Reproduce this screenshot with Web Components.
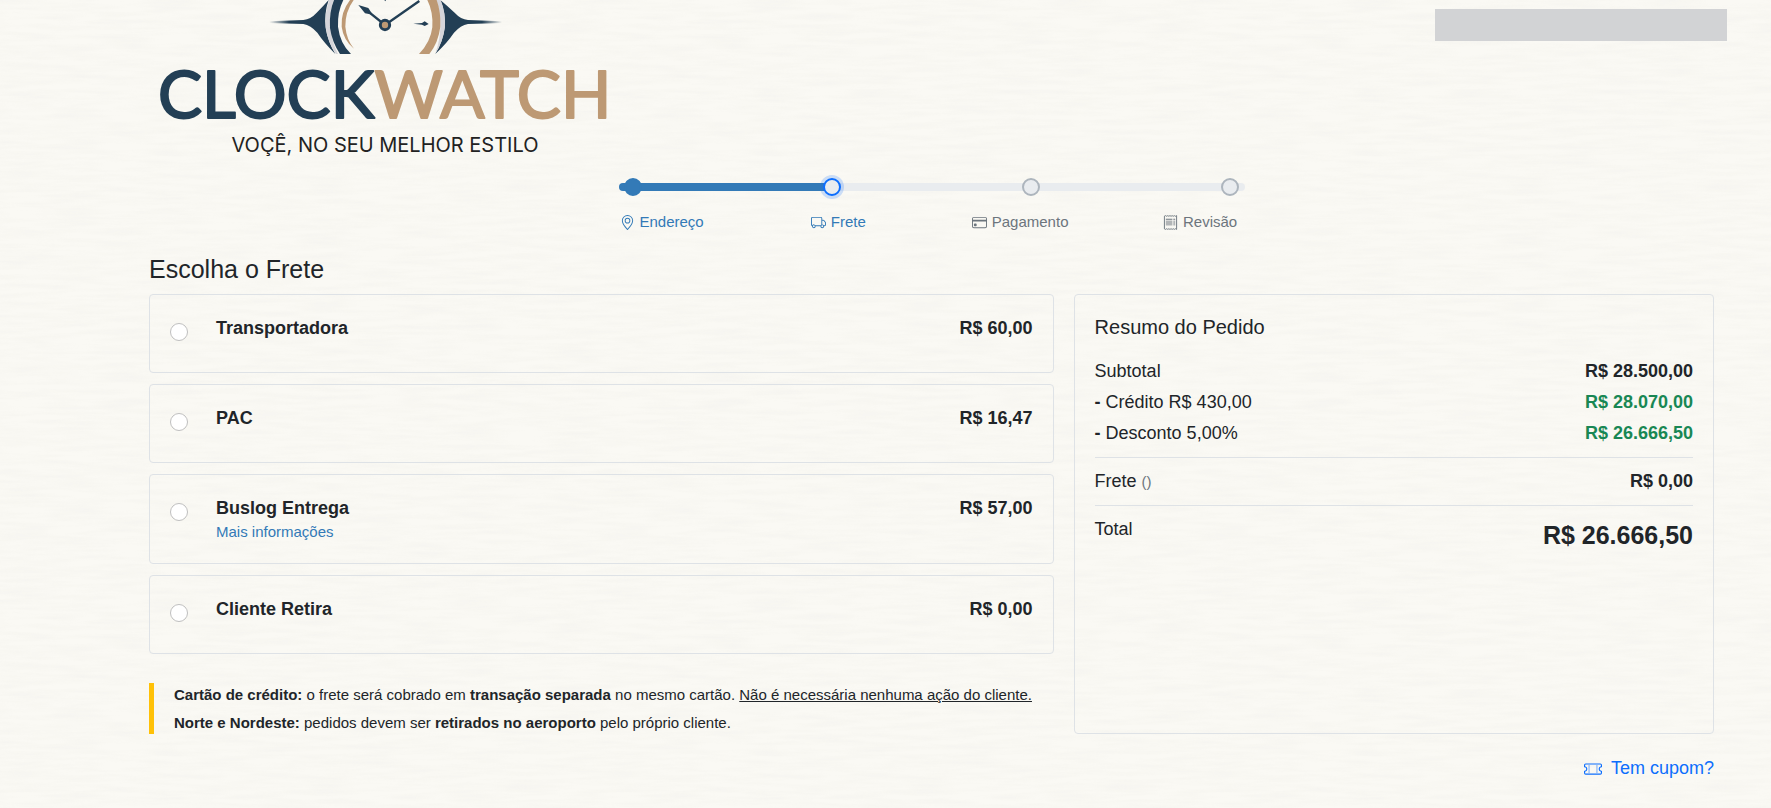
<!DOCTYPE html>
<html lang="pt-BR">
<head>
<meta charset="UTF-8">
<meta name="viewport" content="width=device-width, initial-scale=1">
<title>ClockWatch - Frete</title>
<style>
    :root {
        --text: #212529;
        --muted: #6c757d;
        --border: #dee2e6;
        --brand: #337ab7;
        --link: #0d6efd;
        --success: #198754;
    }

    body {
        margin: 0;
        color: var(--text);
        font: 18px/27px Arial, "Liberation Sans", sans-serif;
        background: #faf9f4 url("data:image/svg+xml,%3Csvg xmlns='http://www.w3.org/2000/svg' width='600' height='600'%3E%3Cfilter id='p' x='0' y='0' width='100%25' height='100%25'%3E%3CfeTurbulence type='fractalNoise' baseFrequency='.02 .2' numOctaves='3' seed='4' stitchTiles='stitch'/%3E%3CfeColorMatrix values='0 0 0 0 .55 0 0 0 0 .55 0 0 0 0 .5 .13 0 0 0 -.045'/%3E%3C/filter%3E%3Crect width='600' height='600' filter='url(%23p)'/%3E%3C/svg%3E");
    }
</style>
</head>
<body>

<store-header></store-header>

<checkout-page>
    <checkout-steps slot="steps"></checkout-steps>

    <shipping-option name="Transportadora" price="R$ 60,00"></shipping-option>
    <shipping-option name="PAC" price="R$ 16,47"></shipping-option>
    <shipping-option name="Buslog Entrega" price="R$ 57,00"><a href="#info">Mais informações</a></shipping-option>
    <shipping-option name="Cliente Retira" price="R$ 0,00"></shipping-option>

    <shipping-notes>
        <p><b>Cartão de crédito:</b> o frete será cobrado em <b>transação separada</b> no mesmo cartão. <u>Não é necessária nenhuma ação do cliente.</u></p>
        <p><b>Norte e Nordeste:</b> pedidos devem ser <b>retirados no aeroporto</b> pelo próprio cliente.</p>
    </shipping-notes>

    <order-summary slot="summary"></order-summary>
    <coupon-link slot="coupon">Tem cupom?</coupon-link>
</checkout-page>

<script>
    // Icons share a 16x16 box
    const ICONS = {
        pin: '<path d="M12.166 8.94c-.524 1.062-1.234 2.12-1.96 3.07A31.5 31.5 0 0 1 8 14.58a31.5 31.5 0 0 1-2.206-2.57c-.726-.95-1.436-2.008-1.96-3.07C3.304 7.867 3 6.862 3 6a5 5 0 0 1 10 0c0 .862-.305 1.867-.834 2.94M8 16s6-5.686 6-10A6 6 0 0 0 2 6c0 4.314 6 10 6 10"/><path d="M8 8a2 2 0 1 1 0-4 2 2 0 0 1 0 4m0 1a3 3 0 1 0 0-6 3 3 0 0 0 0 6"/>',
        truck: '<path d="M0 3.5A1.5 1.5 0 0 1 1.5 2h9A1.5 1.5 0 0 1 12 3.5V5h1.02a1.5 1.5 0 0 1 1.17.563l1.481 1.85a1.5 1.5 0 0 1 .329.938V10.5a1.5 1.5 0 0 1-1.5 1.5H14a2 2 0 1 1-4 0H5a2 2 0 1 1-3.998-.085A1.5 1.5 0 0 1 0 10.5zm1.294 7.456A2 2 0 0 1 4.732 11h5.536a2 2 0 0 1 .732-.732V3.5a.5.5 0 0 0-.5-.5h-9a.5.5 0 0 0-.5.5v7a.5.5 0 0 0 .294.456M12 10a2 2 0 0 1 1.732 1h.768a.5.5 0 0 0 .5-.5V8.35a.5.5 0 0 0-.11-.312l-1.48-1.85A.5.5 0 0 0 13.02 6H12zm-9 1a1 1 0 1 0 0 2 1 1 0 0 0 0-2m9 0a1 1 0 1 0 0 2 1 1 0 0 0 0-2"/>',
        card: '<path d="M0 4a2 2 0 0 1 2-2h12a2 2 0 0 1 2 2v8a2 2 0 0 1-2 2H2a2 2 0 0 1-2-2zm2-1a1 1 0 0 0-1 1v1h14V4a1 1 0 0 0-1-1zm13 4H1v5a1 1 0 0 0 1 1h12a1 1 0 0 0 1-1z"/><path d="M2 10a1 1 0 0 1 1-1h1a1 1 0 0 1 1 1v1a1 1 0 0 1-1 1H3a1 1 0 0 1-1-1z"/>',
        receipt: '<path d="M1.5 1.2 2.5.6l1 .8 1-.8 1 .8 1-.8 1 .8 1-.8 1 .8 1-.8 1 .8 1-.8 1 .8 1-.8v14.8l-1-.8-1 .8-1-.8-1 .8-1-.8-1 .8-1-.8-1 .8-1-.8-1 .8-1-.8-1 .8-1-.6z" fill="none" stroke="currentColor"/><path d="M3 4h7v1H3zm0 2h7v1H3zm0 2h7v1H3zm0 2h7v1H3zm8-6h2v1h-2zm0 2h2v1h-2zm0 2h2v1h-2zm0 2h2v1h-2z"/>',
        ticket: '<path d="M4 4.85v.9h1v-.9zm7 0v.9h1v-.9zm-7 1.8v.9h1v-.9zm7 0v.9h1v-.9zm-7 1.8v.9h1v-.9zm7 0v.9h1v-.9zm-7 1.8v.9h1v-.9zm7 0v.9h1v-.9z"/><path d="M1.5 3A1.5 1.5 0 0 0 0 4.5V6a.5.5 0 0 0 .5.5 1.5 1.5 0 1 1 0 3 .5.5 0 0 0-.5.5v1.5A1.5 1.5 0 0 0 1.5 13h13a1.5 1.5 0 0 0 1.5-1.5V10a.5.5 0 0 0-.5-.5 1.5 1.5 0 0 1 0-3A.5.5 0 0 0 16 6V4.5A1.5 1.5 0 0 0 14.5 3zM1 4.5a.5.5 0 0 1 .5-.5h13a.5.5 0 0 1 .5.5v1.05a2.5 2.5 0 0 0 0 4.9v1.05a.5.5 0 0 1-.5.5h-13a.5.5 0 0 1-.5-.5v-1.05a2.5 2.5 0 0 0 0-4.9z"/>'
    };

    function icon(name, size) {
        return `<svg width="${size}" height="${size}" viewBox="0 0 16 16" fill="currentColor" aria-hidden="true">${ICONS[name]}</svg>`;
    }

    class StoreHeader extends HTMLElement {
        constructor() {
            super();
            this.attachShadow({ mode: 'open' });
        }

        connectedCallback() {
            this.shadowRoot.innerHTML = `
                <style>
                    :host {
                        display: flex;
                        justify-content: space-between;
                        align-items: flex-start;
                        padding: 0 44px 0 140px;
                    }

                    .logo svg {
                        display: block;
                    }

                    .wordmark {
                        font: 66px/1 Lato, sans-serif;
                        stroke-width: 2px;
                        stroke-linejoin: round;
                    }

                    .clock {
                        fill: #233f55;
                        stroke: #233f55;
                    }

                    .watch {
                        fill: #bd9974;
                        stroke: #bd9974;
                    }

                    .tagline {
                        font: 20px/1 Inter, sans-serif;
                        fill: #222;
                        text-anchor: middle;
                    }

                    .account {
                        width: 292px;
                        height: 32px;
                        margin-top: 9px;
                        background: #d2d3d5;
                    }
                </style>
                <a class="logo" href="#inicio" aria-label="ClockWatch">
                    <svg width="500" height="160" viewBox="0 0 500 160">
                        <defs>
                            <linearGradient id="left"><stop offset="0" stop-color="#233f55" stop-opacity="0"/><stop offset=".3" stop-color="#233f55"/></linearGradient>
                            <linearGradient id="right"><stop offset=".7" stop-color="#233f55"/><stop offset="1" stop-color="#233f55" stop-opacity="0"/></linearGradient>
                        </defs>
                        <g transform="scale(.33333)">
                            <path fill="url(#left)" d="M388 64 L490 60 Q512 58 530 38 Q552 16 566 0 Q552 40 557 84 Q564 126 586 162 Q552 128 532 98 Q512 76 490 72 L388 69z"/>
                            <path fill="url(#right)" d="M1086 64 L984 60 Q962 58 944 38 Q920 16 901 0 Q918 40 914 84 Q908 126 886 162 Q922 128 942 98 Q962 76 984 72 L1086 69z"/>
                            <path fill="#d5d5da" d="M568 0H581Q566 40 571 84Q576 128 594 162H588Q562 124 557 80Q554 36 568 0z"/>
                            <path fill="#d5d5da" d="M888 0H902Q917 36 915 80Q909 126 886 160Q900 122 901 80Q902 36 888 0z"/>
                            <path fill="#233f55" d="M582 0H610Q592 36 594 80Q600 130 633 162H600Q576 126 570 84Q567 36 582 0z"/>
                            <path fill="#bd9974" d="M630 0H641Q615 36 616 80Q620 120 642 146Q610 120 605 80Q602 36 630 0z"/>
                            <path fill="#bd9974" d="M862 0H890Q903 36 901 80Q895 128 868 162H837Q872 126 877 82Q880 36 862 0z"/>
                            <path fill="none" stroke="#233f55" stroke-width="7" d="M735 75 838 3M735 75 685 35"/>
                            <path fill="#233f55" d="M655 15 685 24 698 44 675 40z"/>
                            <circle cx="735" cy="75" r="14" fill="#bd9974" stroke="#233f55" stroke-width="9"/>
                            <path fill="#233f55" d="M820 71 846 69 854 64 866 72 854 78 846 74z"/>
                            <path fill="#233f55" d="M733 0h5l-2 4z"/>
                        </g>
                        <text class="wordmark" x="18" y="118"><tspan class="clock">CLOCK</tspan><tspan class="watch">WATCH</tspan></text>
                        <text class="tagline" x="245" y="152">VOÇÊ, NO SEU MELHOR ESTILO</text>
                    </svg>
                </a>
                <div class="account"></div>
            `;
        }
    }

    class CheckoutPage extends HTMLElement {
        constructor() {
            super();
            this.attachShadow({ mode: 'open' });
        }

        connectedCallback() {
            this.shadowRoot.innerHTML = `
                <style>
                    :host {
                        display: block;
                        padding: 16px 57px 24px 149px;
                    }

                    h1 {
                        margin: 19px 0 9px;
                        font-size: 25px;
                        font-weight: normal;
                        line-height: 32px;
                    }

                    .columns {
                        display: grid;
                        grid-template-columns: repeat(12, minmax(0, 1fr));
                        gap: 20px;
                    }

                    .options {
                        grid-column: span 7;
                        display: flex;
                        flex-direction: column;
                        gap: 11px;
                    }

                    .summary {
                        grid-column: span 5;
                        display: grid;
                    }

                    .coupon {
                        display: flex;
                        justify-content: flex-end;
                        margin-top: 21px;
                    }

                    @media (max-width: 900px) {
                        :host {
                            padding: 16px 20px;
                        }

                        .options, .summary {
                            grid-column: span 12;
                        }
                    }
                </style>
                <main>
                    <slot name="steps"></slot>
                    <h1>Escolha o Frete</h1>
                    <div class="columns">
                        <div class="options"><slot></slot></div>
                        <div class="summary"><slot name="summary"></slot></div>
                    </div>
                    <div class="coupon"><slot name="coupon"></slot></div>
                </main>
            `;
        }
    }

    class CheckoutSteps extends HTMLElement {
        constructor() {
            super();
            this.attachShadow({ mode: 'open' });
        }

        connectedCallback() {
            this.shadowRoot.innerHTML = `
                <style>
                    :host {
                        display: block;
                        width: 40%;
                        min-width: 440px;
                        margin: 0 auto;
                    }

                    /* Bar and dots share one grid cell */
                    .track {
                        display: grid;
                        align-items: center;
                        height: 22px;
                    }

                    .bar, .dots {
                        grid-area: 1 / 1;
                    }

                    .bar {
                        height: 8px;
                        border-radius: 4px;
                        background: #e9ecef;
                        overflow: hidden;
                    }

                    .fill {
                        width: 34%;
                        height: 100%;
                        background: var(--brand);
                    }

                    .dots {
                        display: flex;
                        justify-content: space-between;
                        padding: 0 5px;
                    }

                    .dot {
                        box-sizing: border-box;
                        width: 18px;
                        height: 18px;
                        border: 2px solid #adb5bd;
                        border-radius: 50%;
                        background: #e9ecef;
                    }

                    .dot.done {
                        border-color: var(--brand);
                        background: var(--brand);
                    }

                    .dot.current {
                        border-color: var(--link);
                        box-shadow: 0 0 0 3px rgba(13, 110, 253, .2);
                    }

                    ol {
                        display: grid;
                        grid-template-columns: 19fr 16fr 19fr 8fr;
                        margin: 12px 0 0;
                        padding: 0 1px;
                        list-style: none;
                        font-size: 15px;
                        line-height: 24px;
                        color: var(--muted);
                    }

                    li {
                        display: flex;
                        align-items: center;
                        gap: 5px;
                        white-space: nowrap;
                    }

                    li.active {
                        color: var(--brand);
                    }
                </style>
                <div class="track">
                    <div class="bar"><div class="fill"></div></div>
                    <div class="dots">
                        <span class="dot done"></span>
                        <span class="dot current"></span>
                        <span class="dot"></span>
                        <span class="dot"></span>
                    </div>
                </div>
                <ol>
                    <li class="active">${icon('pin', 15)}Endereço</li>
                    <li class="active">${icon('truck', 15)}Frete</li>
                    <li>${icon('card', 15)}Pagamento</li>
                    <li>${icon('receipt', 15)}Revisão</li>
                </ol>
            `;
        }
    }

    class ShippingOption extends HTMLElement {
        constructor() {
            super();
            this.attachShadow({ mode: 'open' });
        }

        connectedCallback() {
            this.shadowRoot.innerHTML = `
                <style>
                    :host {
                        display: flex;
                        align-items: flex-start;
                        box-sizing: border-box;
                        min-height: 79px;
                        padding: 20px;
                        border: 1px solid var(--border);
                        border-radius: 4px;
                    }

                    input {
                        appearance: none;
                        box-sizing: border-box;
                        width: 18px;
                        height: 18px;
                        margin: 8px 28px 0 0;
                        border: 1px solid #bfbfbf;
                        border-radius: 50%;
                        background: #fff;
                    }

                    input:checked {
                        border: 5px solid var(--link);
                    }

                    .info {
                        flex: 1;
                    }

                    label {
                        display: block;
                        font-weight: bold;
                    }

                    ::slotted(a) {
                        display: block;
                        width: fit-content;
                        margin-bottom: 2px;
                        font-size: 15px;
                        line-height: 19px;
                        color: var(--brand);
                        text-decoration: none;
                    }
                </style>
                <input type="radio" id="option" name="frete">
                <div class="info">
                    <label for="option">${this.getAttribute('name')}</label>
                    <slot></slot>
                </div>
                <strong>${this.getAttribute('price')}</strong>
            `;

            // Radios in separate shadow roots don't group by name
            this.shadowRoot.querySelector('input').addEventListener('change', () => {
                document.querySelectorAll('shipping-option').forEach(option => {
                    if (option !== this) option.shadowRoot.querySelector('input').checked = false;
                });
            });
        }
    }

    class ShippingNotes extends HTMLElement {
        constructor() {
            super();
            this.attachShadow({ mode: 'open' });
        }

        connectedCallback() {
            this.shadowRoot.innerHTML = `
                <style>
                    :host {
                        display: flex;
                        flex-direction: column;
                        gap: 5px;
                        margin-top: 18px;
                        padding-left: 20px;
                        border-left: 5px solid #ffc107;
                        font-size: 15px;
                        line-height: 23px;
                    }

                    ::slotted(p) {
                        margin: 0;
                    }
                </style>
                <slot></slot>
            `;
        }
    }

    class OrderSummary extends HTMLElement {
        constructor() {
            super();
            this.attachShadow({ mode: 'open' });
        }

        connectedCallback() {
            this.shadowRoot.innerHTML = `
                <style>
                    :host {
                        display: block;
                        padding: 20px;
                        border: 1px solid var(--border);
                        border-radius: 4px;
                    }

                    h2 {
                        margin: 0 0 19px;
                        font-size: 20px;
                        font-weight: normal;
                        line-height: 24px;
                    }

                    dl {
                        margin: 0;
                    }

                    dl div {
                        display: flex;
                        justify-content: space-between;
                    }

                    .item + .item {
                        margin-top: 4px;
                    }

                    .section {
                        margin-top: 10px;
                        padding-top: 10px;
                        border-top: 1px solid var(--border);
                    }

                    dd {
                        margin: 0;
                        font-weight: bold;
                    }

                    .discount {
                        color: var(--success);
                    }

                    small {
                        font-size: 15px;
                        color: var(--muted);
                    }

                    .total {
                        font-size: 25px;
                        line-height: 38px;
                    }
                </style>
                <h2>Resumo do Pedido</h2>
                <dl>
                    <div class="item"><dt>Subtotal</dt><dd>R$ 28.500,00</dd></div>
                    <div class="item"><dt><b>-</b> Crédito R$ 430,00</dt><dd class="discount">R$ 28.070,00</dd></div>
                    <div class="item"><dt><b>-</b> Desconto 5,00%</dt><dd class="discount">R$ 26.666,50</dd></div>
                    <div class="section"><dt>Frete <small>()</small></dt><dd>R$ 0,00</dd></div>
                    <div class="section"><dt>Total</dt><dd class="total">R$ 26.666,50</dd></div>
                </dl>
            `;
        }
    }

    class CouponLink extends HTMLElement {
        constructor() {
            super();
            this.attachShadow({ mode: 'open' });
        }

        connectedCallback() {
            this.shadowRoot.innerHTML = `
                <style>
                    :host {
                        display: block;
                    }

                    a {
                        display: flex;
                        align-items: center;
                        gap: 9px;
                        color: var(--link);
                        text-decoration: none;
                    }
                </style>
                <a href="#cupom">${icon('ticket', 18)}<span><slot></slot></span></a>
            `;
        }
    }

    customElements.define('store-header', StoreHeader);
    customElements.define('checkout-page', CheckoutPage);
    customElements.define('checkout-steps', CheckoutSteps);
    customElements.define('shipping-option', ShippingOption);
    customElements.define('shipping-notes', ShippingNotes);
    customElements.define('order-summary', OrderSummary);
    customElements.define('coupon-link', CouponLink);
</script>
</body>
</html>
